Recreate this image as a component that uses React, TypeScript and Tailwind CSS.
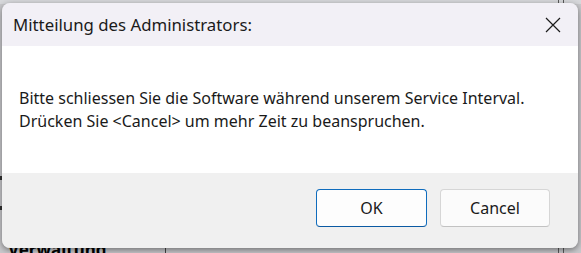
import React from "react";

const font = { fontFamily: '"Noto Sans", "Open Sans", sans-serif' };

const CloseIcon = () => (
  <svg width="16" height="16" viewBox="0 0 16 16" fill="none">
    <path d="M1 1L15 15M15 1L1 15" stroke="#1b1b1b" strokeWidth="1.2" />
  </svg>
);

const DialogButton: React.FC<{ label: string; primary?: boolean }> = ({ label, primary }) => (
  <button
    className={
      primary
        ? "w-[111px] h-[38px] rounded-[4px] border border-[#0f6cbd] border-b-[#0b5aa3] bg-[#fdfdfd] text-[16px] text-[#1a1a1a]"
        : "w-[110px] h-[38px] rounded-[4px] border border-[#d6d6d6] border-b-[#c2c2c2] bg-[#fbfbfb] text-[16px] text-[#1a1a1a]"
    }
  >
    {label}
  </button>
);

export default function App() {
  return (
    <div className="relative w-[581px] h-[253px] overflow-hidden bg-[#c9c9cc] pl-[2px] pt-[3px]" style={font}>
      {/* app behind the dialog */}
      <div className="absolute inset-x-0 top-0 h-[4px] bg-[#d7d8db]" />
      <div className="absolute left-[558px] top-0 w-[6px] h-[253px] border-x border-[#5a5a5a]" />
      <div className="absolute left-[165px] bottom-0 w-px h-[13px] bg-[#444]" />
      <div className="absolute left-0 top-[176px] w-[2px] h-[34px] border-y-[4px] border-[#333]" />
      <div className="absolute left-[8px] top-[241px] text-[17px] font-bold text-black leading-none">
        Verwaltung
      </div>

      {/* dialog window */}
      <div className="relative w-[576px] h-[245px] rounded-[8px] overflow-hidden flex flex-col shadow-[0_2px_6px_rgba(0,0,0,0.45)]">
        <div className="h-[43px] bg-[#f2f0f6] flex items-center justify-between pl-[11px] pr-[17px]">
          <span className="text-[16.8px] text-[#1a1a1a]">Mitteilung des Administrators:</span>
          <CloseIcon />
        </div>
        <div className="h-[127px] bg-white pl-[17px] pt-[41px] text-[16px] leading-[23px] text-[#1a1a1a]">
          <p>Bitte schliessen Sie die Software während unserem Service Interval.</p>
          <p>Drücken Sie &lt;Cancel&gt; um mehr Zeit zu beanspruchen.</p>
        </div>
        <div className="flex-1 bg-[#f0f0f0] flex justify-end items-start gap-[13px] pt-[16px] pr-[28px]">
          <DialogButton label="OK" primary />
          <DialogButton label="Cancel" />
        </div>
      </div>
    </div>
  );
}
